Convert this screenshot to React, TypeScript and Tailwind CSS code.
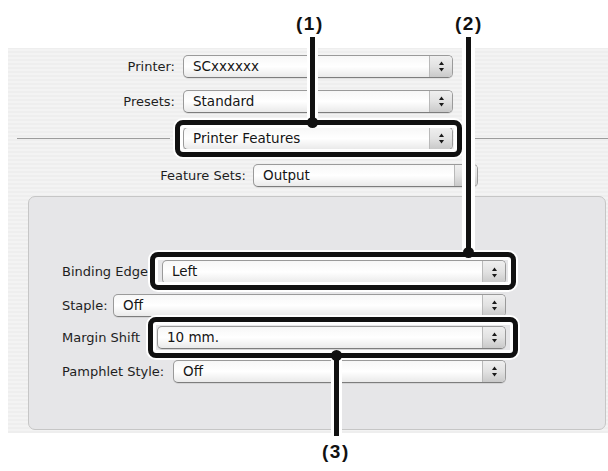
import React from "react";

function Arrows() {
    return (
        <svg width="7" height="13" viewBox="0 0 7 13">
            <path d="M3.5 1.5 L6 5 L1 5 Z" fill="#1a1a1a" />
            <path d="M3.5 11.5 L6 8 L1 8 Z" fill="#1a1a1a" />
        </svg>
    );
}

function Popup({ value, className = "" }: { value: string; className?: string }) {
    return (
        <div
            className={`flex h-[23px] items-stretch rounded-[5px] border border-[#9a9a9a] border-b-[#7d7d7d] bg-gradient-to-b from-[#f7f7f7] via-white to-[#eaeaea] shadow-[0_1px_0_rgba(0,0,0,0.08)] ${className}`}
        >
            <span className="flex items-center pl-[9px] text-[13.5px] leading-none text-[#151515]">{value}</span>
            <div className="ml-auto flex w-[23px] items-center justify-center rounded-r-[4px] border-l border-[#b9b9b9] bg-gradient-to-b from-[#efefef] via-[#e2e2e2] to-[#c9c9c9]">
                <Arrows />
            </div>
        </div>
    );
}

function Callout({ text, className }: { text: string; className: string }) {
    return (
        <span
            className={`absolute font-['Liberation_Sans',Arial,sans-serif] text-[19px] leading-none font-bold tracking-[1.5px] text-[#111] ${className}`}
        >
            {text}
        </span>
    );
}

export default function App() {
    return (
        <div className="relative h-[471px] w-[608px] overflow-hidden bg-white pt-[48px] pl-[8px] font-['DejaVu_Sans','Liberation_Sans',sans-serif] text-[#1e1e1e]">
            {/* sheet */}
            <div className="h-[385px] w-[600px] bg-[repeating-linear-gradient(0deg,#eeeeee_0px,#eeeeee_2px,#f3f3f3_2px,#f3f3f3_4px)] pt-[7px]">
                <div className="flex h-[23px] items-center">
                    <span className="w-[167px] text-right text-[13px]">Printer:</span>
                    <Popup value="SCxxxxxx" className="ml-[8px] w-[270px]" />
                </div>
                <div className="mt-[12px] flex h-[23px] items-center">
                    <span className="w-[167px] text-right text-[13px]">Presets:</span>
                    <Popup value="Standard" className="ml-[8px] w-[270px]" />
                </div>
                <div className="mt-[14px] flex h-[23px] items-center">
                    <div className="ml-[9px] h-px w-[153px] bg-[#9c9c9c]" />
                    <Popup value="Printer Features" className="ml-[13px] w-[270px]" />
                    <div className="ml-[22px] h-px flex-1 bg-[#9c9c9c]" />
                </div>
                <div className="mt-[14px] flex h-[23px] items-center">
                    <span className="w-[238px] text-right text-[13px]">Feature Sets:</span>
                    <Popup value="Output" className="ml-[7px] w-[225px]" />
                </div>

                {/* group box */}
                <div className="mt-[9px] ml-[20px] h-[234px] w-[578px] rounded-[7px] border border-[#c6c6c6] bg-[#e6e6e8] pt-[63px] pr-[99px] pl-[33px]">
                    <div className="flex h-[24px] items-center">
                        <span className="w-[100px] shrink-0 text-[13px] whitespace-nowrap">Binding Edge:</span>
                        <Popup value="Left" className="h-[24px] flex-1" />
                    </div>
                    <div className="mt-[10px] flex h-[23px] items-center">
                        <span className="w-[51px] shrink-0 text-[13px] whitespace-nowrap">Staple:</span>
                        <Popup value="Off" className="flex-1" />
                    </div>
                    <div className="mt-[9px] flex h-[23px] items-center">
                        <span className="w-[95px] shrink-0 text-[13px] whitespace-nowrap">Margin Shift</span>
                        <Popup value="10 mm." className="flex-1" />
                    </div>
                    <div className="mt-[11px] flex h-[23px] items-center">
                        <span className="w-[111px] shrink-0 text-[13px] whitespace-nowrap">Pamphlet Style:</span>
                        <Popup value="Off" className="flex-1" />
                    </div>
                </div>
            </div>

            {/* callout lines */}
            <div className="absolute top-[37px] left-[310px] h-[85px] w-[5px] bg-[#111] shadow-[0_0_0_3px_white]" />
            <div className="absolute top-[37px] left-[466px] h-[215px] w-[5px] bg-[#111] shadow-[0_0_0_4px_white]" />
            <div className="absolute top-[357px] left-[334px] h-[79px] w-[5px] bg-[#111] shadow-[0_0_0_3px_white]" />

            {/* highlight frames */}
            <div className="absolute top-[120px] left-[175px] h-[37px] w-[287px] rounded-[8px] border-[5px] border-[#111] shadow-[0_0_0_2px_white,inset_0_0_0_3px_white]" />
            <div className="absolute top-[252px] left-[150px] h-[38px] w-[366px] rounded-[8px] border-[5px] border-[#111] shadow-[0_0_0_2px_white,inset_0_0_0_3px_white]" />
            <div className="absolute top-[317px] left-[148px] h-[41px] w-[370px] rounded-[8px] border-[5px] border-[#111] shadow-[0_0_0_2px_white,inset_0_0_0_3px_white]" />

            {/* dots */}
            <div className="absolute top-[117px] left-[307px] h-[11px] w-[11px] rounded-full bg-[#111]" />
            <div className="absolute top-[247px] left-[463px] h-[11px] w-[11px] rounded-full bg-[#111]" />
            <div className="absolute top-[350px] left-[331px] h-[11px] w-[11px] rounded-full bg-[#111]" />

            <Callout text="(1)" className="top-[14px] left-[296px]" />
            <Callout text="(2)" className="top-[14px] left-[455px]" />
            <Callout text="(3)" className="top-[442px] left-[322px]" />
        </div>
    );
}
